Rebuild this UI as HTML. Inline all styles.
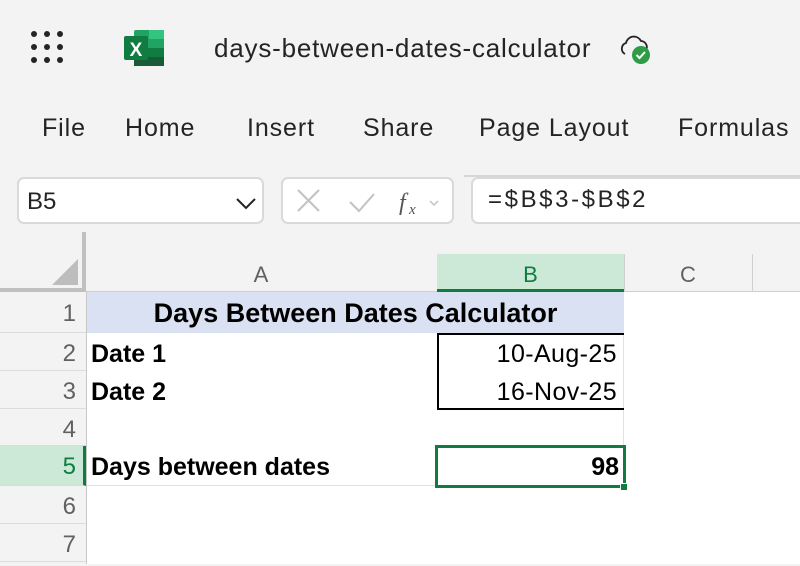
<!DOCTYPE html>
<html><head><style>
*{margin:0;padding:0;box-sizing:border-box}
body{width:800px;height:564px;overflow:hidden;background:#f3f3f3;font-family:"Liberation Sans",sans-serif;position:relative;color:#242424}
.a{position:absolute;white-space:nowrap}
.tab{position:absolute;top:114px;font-size:25px;color:#242424;letter-spacing:0.9px}
.rh{position:absolute;left:0;width:86px;text-align:right;padding-right:10px;font-size:24px;color:#616161;border-bottom:1px solid #dcdcdc;background:#f3f3f3}
.b{font-weight:bold;color:#000;font-size:25px}
</style></head><body>
<svg class="a" style="left:30px;top:30px" width="36" height="36">
<g fill="#242424"><circle cx="4" cy="4" r="3"/><circle cx="17" cy="4" r="3"/><circle cx="30" cy="4" r="3"/><circle cx="4" cy="17" r="3"/><circle cx="17" cy="17" r="3"/><circle cx="30" cy="17" r="3"/><circle cx="4" cy="30" r="3"/><circle cx="17" cy="30" r="3"/><circle cx="30" cy="30" r="3"/></g></svg>
<svg class="a" style="left:124px;top:30px" width="40" height="36">
<rect x="10" y="0" width="30" height="36" rx="2" fill="#21a366"/>
<rect x="25" y="0" width="15" height="9" fill="#33c481"/>
<rect x="10" y="18" width="30" height="9" fill="#107c41"/>
<rect x="10" y="27" width="30" height="9" fill="#185c37"/>
<rect x="0" y="6" width="24" height="24" rx="2" fill="#107c41"/>
<text x="12" y="26" font-size="19" font-weight="bold" fill="#fff" text-anchor="middle" font-family="Liberation Sans">X</text>
</svg>
<div class="a" style="left:214px;top:33px;font-size:26px;letter-spacing:0.8px;color:#242424">days-between-dates-calculator</div>
<svg class="a" style="left:617px;top:32px" width="36" height="34">
<path d="M8 22 a6 6 0 0 1 1-11 a8 8 0 0 1 15-2 a6 6 0 0 1 5 9" fill="none" stroke="#242424" stroke-width="1.8"/>
<circle cx="24" cy="23" r="9" fill="#2e9b47"/>
<path d="M19.5 23 l3 3 l5.5-6" fill="none" stroke="#fff" stroke-width="2"/>
</svg>
<div class="tab" style="left:42px">File</div>
<div class="tab" style="left:125px">Home</div>
<div class="tab" style="left:247px">Insert</div>
<div class="tab" style="left:363px">Share</div>
<div class="tab" style="left:479px">Page Layout</div>
<div class="tab" style="left:678px">Formulas</div>
<div class="a" style="left:464px;top:175px;width:336px;height:2px;background:#d6d6d6"></div>
<div class="a" style="left:17px;top:177px;width:247px;height:47px;background:#fff;border:2px solid #d9d9d9;border-radius:7px"></div>
<div class="a" style="left:27px;top:188px;font-size:24px;color:#242424">B5</div>
<svg class="a" style="left:234px;top:195px" width="24" height="16"><path d="M3 4 l9 9 l9-9" fill="none" stroke="#242424" stroke-width="2"/></svg>
<div class="a" style="left:281px;top:177px;width:173px;height:47px;background:#fff;border:2px solid #d9d9d9;border-radius:7px"></div>
<svg class="a" style="left:295px;top:186px" width="160" height="30">
<path d="M3 4 l21 21 M24 4 l-21 21" stroke="#c2c2c2" stroke-width="2"/>
<path d="M55 16 l9 9 l15-17" fill="none" stroke="#c2c2c2" stroke-width="2"/>
<text x="104" y="24" font-size="24" font-style="italic" fill="#555" font-family="Liberation Serif">f</text>
<text x="114" y="28" font-size="15" font-style="italic" fill="#555" font-family="Liberation Serif">x</text>
<path d="M135 15 l4 4 l4-4" fill="none" stroke="#c2c2c2" stroke-width="1.5"/>
</svg>
<div class="a" style="left:471px;top:177px;width:340px;height:47px;background:#fff;border:2px solid #d9d9d9;border-radius:7px"></div>
<div class="a" style="left:488px;top:186px;font-size:24px;letter-spacing:2.6px;color:#242424">=$B$3-$B$2</div>
<div class="a" style="left:82px;top:232px;width:4px;height:62px;background:#c0c0c0"></div>
<div class="a" style="left:0;top:288px;width:86px;height:4px;background:#c0c0c0"></div>
<svg class="a" style="left:52px;top:259px" width="28" height="28"><path d="M26 0 V26 H0 Z" fill="#bdbdbd"/></svg>
<div class="a" style="left:86px;top:291px;width:714px;height:1px;background:#d0d0d0"></div>
<div class="a" style="left:86px;top:262px;width:350px;text-align:center;font-size:22px;color:#616161">A</div>
<div class="a" style="left:437px;top:254px;width:187px;height:38px;background:#cbe9d6;border-bottom:3px solid #107c41"></div>
<div class="a" style="left:437px;top:262px;width:187px;text-align:center;font-size:22px;color:#107c41">B</div>
<div class="a" style="left:624px;top:254px;width:1px;height:38px;background:#d0d0d0"></div>
<div class="a" style="left:624px;top:262px;width:128px;text-align:center;font-size:22px;color:#616161">C</div>
<div class="a" style="left:752px;top:254px;width:1px;height:38px;background:#d0d0d0"></div>
<div class="a" style="left:86px;top:292px;width:714px;height:272px;background:#fff;border-left:1px solid #c8c8c8"></div>
<div class="rh" style="top:292px;height:41px;line-height:44px">1</div>
<div class="rh" style="top:333px;height:38px;line-height:42px">2</div>
<div class="rh" style="top:371px;height:38px;line-height:42px">3</div>
<div class="rh" style="top:409px;height:37px;line-height:42px">4</div>
<div class="rh" style="top:446px;height:40px;line-height:42px;background:#cbe9d6;color:#107c41;border-right:3px solid #107c41;padding-right:7px">5</div>
<div class="rh" style="top:486px;height:38px;line-height:42px">6</div>
<div class="rh" style="top:524px;height:38px;line-height:42px">7</div>
<div class="a" style="left:87px;top:292px;width:537px;height:41px;background:#dae1f2"></div>
<div class="a b" style="left:87px;top:298px;width:537px;text-align:center;font-size:27px;letter-spacing:0">Days Between Dates Calculator</div>
<div class="a" style="left:623px;top:333px;width:1px;height:153px;background:#dae1f2"></div>
<div class="a" style="left:87px;top:485px;width:537px;height:1px;background:#dae1f2"></div>
<div class="a b" style="left:91px;top:340px">Date 1</div>
<div class="a b" style="left:91px;top:378px">Date 2</div>
<div class="a b" style="left:91px;top:453px;letter-spacing:0">Days between dates</div>
<div class="a" style="left:437px;top:333px;width:187px;height:77px;border:2px solid #000;border-right:none"></div>
<div class="a" style="left:437px;top:340px;width:180px;text-align:right;font-size:25px;letter-spacing:0.4px;color:#000">10-Aug-25</div>
<div class="a" style="left:437px;top:378px;width:180px;text-align:right;font-size:25px;letter-spacing:0.4px;color:#000">16-Nov-25</div>
<div class="a" style="left:435px;top:445px;width:191px;height:43px;border:3px solid #107c41"></div>
<div class="a" style="left:620px;top:483px;width:8px;height:8px;background:#107c41;border:1px solid #fff"></div>
<div class="a b" style="left:437px;top:453px;width:182px;text-align:right">98</div>
</body></html>
